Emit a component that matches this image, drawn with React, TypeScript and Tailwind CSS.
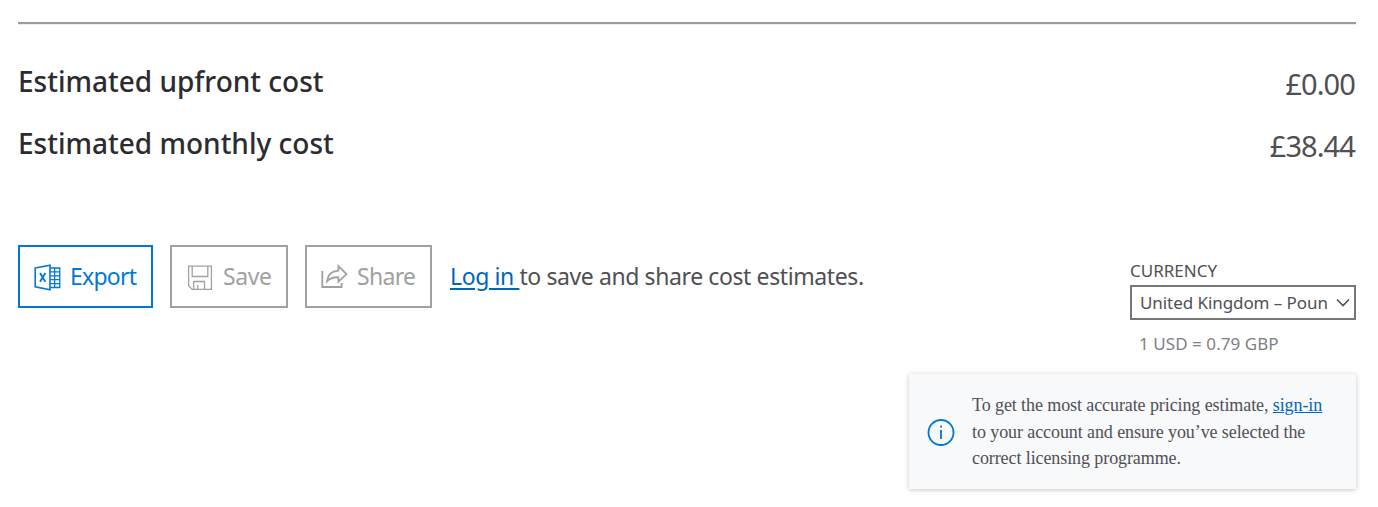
import React from "react";

function ExcelIcon() {
  return (
    <svg className="h-7 w-7 shrink-0" viewBox="0 0 28 28" fill="none" stroke="currentColor" strokeWidth="1.3">
      <path d="M1.2 5 16 2.1v24.7L1.2 23.8Z" strokeWidth="1.6" />
      <path d="M16.3 5h9.5v19.5h-9.5M16.3 8.9h9.5M16.3 12.8h9.5M16.3 16.7h9.5M16.3 20.6h9.5M20.6 5v19.5" />
      <path d="m6 10 5.4 8.8M11.4 10 6 18.8" strokeWidth="1.8" />
    </svg>
  );
}

function SaveIcon() {
  return (
    <svg className="h-7 w-7 shrink-0" viewBox="0 0 28 28" fill="none" stroke="currentColor" strokeWidth="1.3">
      <path d="M2.6 3.2h22.8v23.2H6.3l-3.7-3.7Z" />
      <path d="M6.2 3.2v10.3h15.6V3.2M7.7 26.4v-7.9h10.8v7.9M11.7 26.4v-4.3" />
    </svg>
  );
}

function ShareIcon() {
  return (
    <svg className="h-7 w-7 shrink-0" viewBox="0 0 28 28" fill="none" stroke="currentColor" strokeWidth="1.8">
      <path d="M1.3 8v16h19.3v-4" />
      <path d="M17.4 3.1 25.5 11.1l-8.1 7.6v-4.4c-5.2-.3-8.6 1.1-11.4 4 .6-6.1 4.6-10.1 11.4-10.6Z" />
    </svg>
  );
}

export default function App() {
  return (
    <main className="h-[507px] w-[1378px] overflow-hidden bg-white pl-[18px] pr-[22px] pt-[22px] font-['Noto_Sans',sans-serif] text-[#505054]">
      <hr className="h-[3px] border-0 border-t-2 border-[#9c9c9c] bg-[#ececec]" />
      <section className="pt-[26px]">
        <div className="flex h-[62px] items-center justify-between">
          <h2 className="pb-[2px] text-[28px] font-medium leading-[40px] text-[#2c2c30]">Estimated upfront cost</h2>
          <span className="pr-px pt-[4px] text-[29px] leading-[40px] tracking-[-0.9px]">£0.00</span>
        </div>
        <div className="flex h-[62px] items-center justify-between">
          <h2 className="pb-[2px] text-[28px] font-medium leading-[40px] text-[#2c2c30]">Estimated monthly cost</h2>
          <span className="pr-px pt-[4px] text-[29px] leading-[40px] tracking-[-0.9px]">£38.44</span>
        </div>
      </section>
      <section className="mt-[70px] flex items-start justify-between">
        <div className="flex items-center whitespace-nowrap text-[23px] tracking-[-0.4px]">
          <button className="flex h-[63px] w-[135px] items-center gap-2 border-2 border-[#0078d4] pl-[14px] text-[#0078d4]">
            <ExcelIcon />
            <span className="pb-px tracking-[-0.75px]">Export</span>
          </button>
          <button className="ml-[17px] flex h-[63px] w-[118px] items-center gap-2 border-2 border-[#a1a1a1] pl-[14px] text-[#a1a1a1]">
            <SaveIcon />
            <span className="pb-px pl-px">Save</span>
          </button>
          <button className="ml-[17px] flex h-[63px] w-[127px] items-center gap-2 border-2 border-[#a1a1a1] pl-[14px] text-[#a1a1a1]">
            <ShareIcon />
            <span className="pb-px tracking-[-0.7px]">Share</span>
          </button>
          <p className="ml-[18px] pb-px">
            <a href="#" className="text-[#0067b8] underline decoration-2 underline-offset-[3px]">Log in </a>to save and share cost estimates.
          </p>
        </div>
        <div className="w-[226px] pt-[14px]">
          <label className="block text-[17px] leading-[24px]">CURRENCY</label>
          <div className="mt-[2px] flex h-[35px] items-center justify-between border-2 border-[#77777a] pl-[8px] pr-[3px] text-[17px] tracking-[-0.07px]">
            <span className="whitespace-nowrap">United Kingdom – Poun</span>
            <svg className="h-4 w-4 shrink-0" viewBox="0 0 16 16" fill="none" stroke="currentColor" strokeWidth="1.6">
              <path d="m2 4.5 6 6 6-6" />
            </svg>
          </div>
          <p className="mt-[12px] pl-[9px] text-[17px] leading-[24px] tracking-[0.06px] text-[#808084]">1 USD = 0.79 GBP</p>
        </div>
      </section>
      <aside className="ml-auto mt-[18px] flex h-[115px] w-[447px] items-center bg-[#f8f9fb] pl-[18px] shadow-[0_1px_5px_rgba(0,0,0,0.22)]">
        <svg className="h-7 w-7 shrink-0 text-[#0078d4]" viewBox="0 0 28 28" fill="none" stroke="currentColor" strokeWidth="1.8">
          <circle cx="14" cy="14.5" r="12.5" />
          <path d="M14 12v9M14 7.5v2" />
        </svg>
        <p className="ml-[17px] whitespace-nowrap pt-px font-['Liberation_Serif',serif] text-[18px] leading-[26.7px] tracking-[-0.09px]">
          To get the most accurate pricing estimate, <a href="#" className="text-[#0067b8] underline">sign-in</a>
          <br />
          to your account and ensure you’ve selected the
          <br />
          correct licensing programme.
        </p>
      </aside>
    </main>
  );
}
